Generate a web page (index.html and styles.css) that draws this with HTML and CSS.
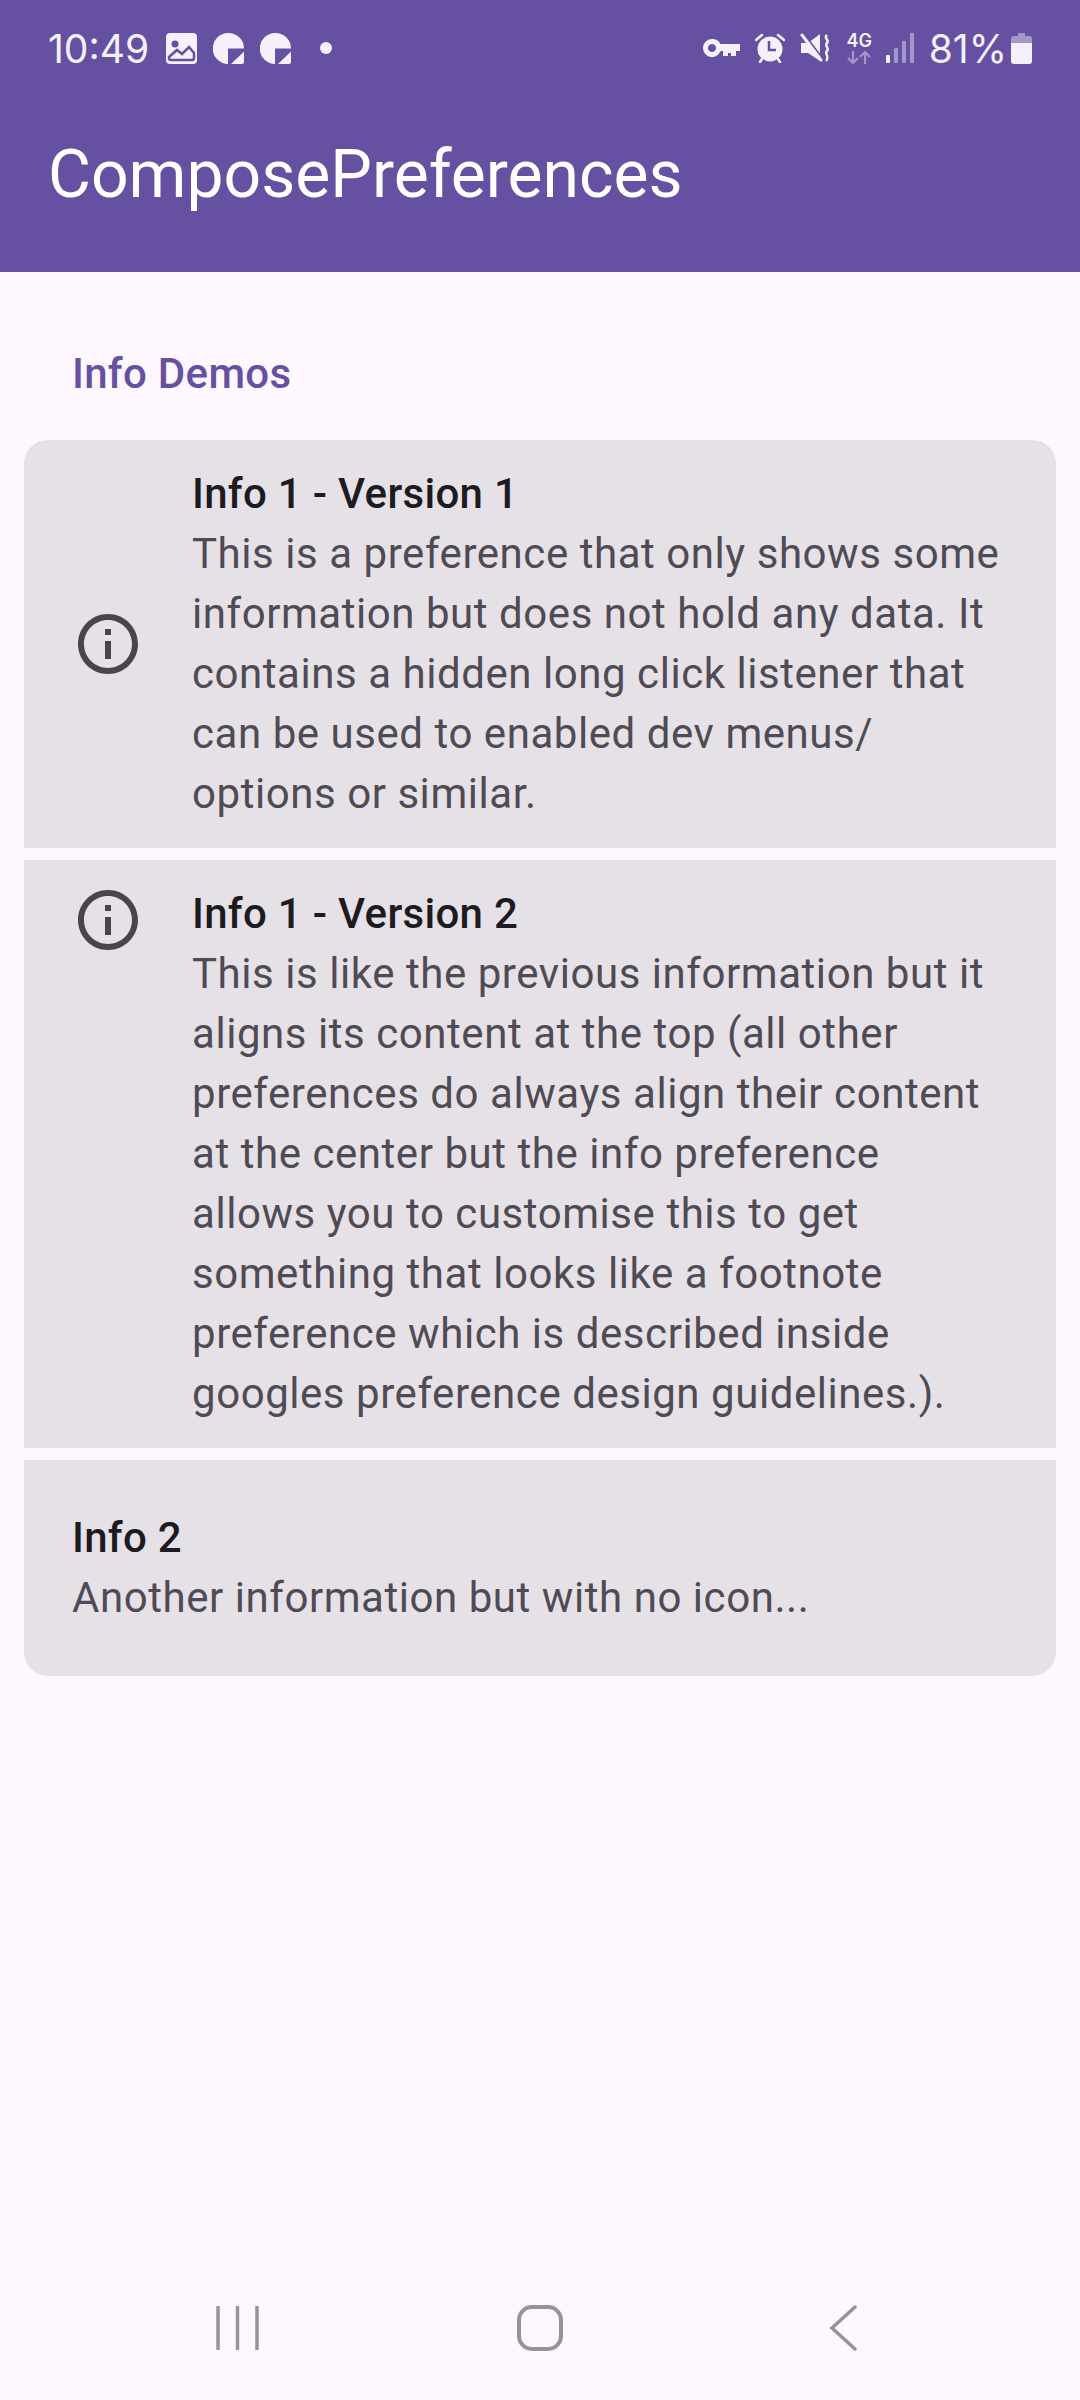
FILE: index.html
```html
<!DOCTYPE html>
<html lang="en">
<head>
    <meta charset="UTF-8">
    <title>ComposePreferences</title>
    <link rel="stylesheet" href="styles.css">
</head>
<body>
    <header class="app-header">
        <div class="status-bar">
            <div class="status-group status-left">
                <span class="clock">10:49</span>
                <svg class="ic-note" viewBox="0 0 31 31"><rect width="31" height="31" rx="4" fill="#f4f1fa"/><circle cx="9" cy="11" r="3.500" fill="#6650a1"/><path d="M3 24l8-7 5 4 7-7 5 6v5a2 2 0 0 1-2 2H5a2 2 0 0 1-2-2z" fill="none" stroke="#6650a1" stroke-width="2.500"/></svg>
                <svg class="ic-note" viewBox="0 0 31 31"><path fill="#f4f1fa" d="M15.500 0A15.500 15.500 0 0 1 31 15.500H15V31A15.500 15.500 0 0 1 15.500 0zM18 31L31 18.500V29a2 2 0 0 1-2 2z"/></svg>
                <svg class="ic-note" viewBox="0 0 31 31"><path fill="#f4f1fa" d="M15.500 0A15.500 15.500 0 0 1 31 15.500H15V31A15.500 15.500 0 0 1 15.500 0zM18 31L31 18.500V29a2 2 0 0 1-2 2z"/></svg>
                <span class="status-dot"></span>
            </div>
            <div class="status-group status-right">
                <svg class="ic-key" viewBox="0 0 38 18"><path fill="#f4f1fa" fill-rule="evenodd" d="M9 0a9 9 0 0 1 8.500 5H37v7h-4v5h-5v-3h-3v3h-5v-5h-2.500A9 9 0 1 1 9 0zm0 5a4 4 0 1 0 .01 0z"/></svg>
                <svg class="ic-alarm" viewBox="0 0 30 30"><circle cx="15" cy="16" r="12.500" fill="#f4f1fa"/><path d="M14 8v9h7" fill="none" stroke="#6650a1" stroke-width="2.500"/><path d="M1 7l6-5M29 7l-6-5M5 29l2-3M25 29l-2-3" stroke="#f4f1fa" stroke-width="2.500" stroke-linecap="round"/></svg>
                <svg class="ic-mute" viewBox="0 0 30 30"><path fill="#f4f1fa" d="M1 10h7l12-9v27l-12-8H1z"/><path d="M1 -2L23 27" stroke="#6650a1" stroke-width="3"/><path d="M2 2l19 25" stroke="#f4f1fa" stroke-width="3" stroke-linecap="round"/><path d="M27 2c-4 3 3 5 0 8s3 5 0 8 3 5-1 10" fill="none" stroke="#f4f1fa" stroke-width="2.500"/></svg>
                <div class="net">
                    <span class="net-label">4G</span>
                    <svg class="ic-arrows" viewBox="0 0 25 13"><path d="M6 0v12M1 7l5 5 5-5M18 13V1M13 6l5-5 5 5" fill="none" stroke="#a596c9" stroke-width="2.200"/></svg>
                </div>
                <svg class="ic-signal" viewBox="0 0 28 30"><rect y="22" width="4" height="8" rx="1" fill="#f4f1fa"/><rect x="8" y="15" width="4" height="15" rx="1" fill="#a596c9"/><rect x="16" y="8" width="4" height="22" rx="1" fill="#a596c9"/><rect x="24" y="0" width="4" height="30" rx="1" fill="#a596c9"/></svg>
                <span class="battery-text">81%</span>
                <svg class="ic-battery" viewBox="0 0 21 31"><path fill="#a596c9" d="M7 0h7v3h4a3 3 0 0 1 3 3v6H0V6a3 3 0 0 1 3-3h4z"/><path fill="#f4f1fa" d="M0 10h21v18a3 3 0 0 1-3 3H3a3 3 0 0 1-3-3z"/></svg>
            </div>
        </div>
        <div class="toolbar">ComposePreferences</div>
    </header>

    <main class="content">
        <div class="section-title">Info Demos</div>
        <div class="pref-list">
            <div class="pref pref-first">
                <svg class="info-icon" viewBox="0 0 24 24"><path fill="#49454f" d="M11 7h2v2h-2zm0 4h2v6h-2zm1-9C6.480 2 2 6.480 2 12s4.480 10 10 10 10-4.480 10-10S17.520 2 12 2zm0 18c-4.410 0-8-3.590-8-8s3.590-8 8-8 8 3.590 8 8-3.590 8-8 8z"/></svg>
                <div class="pref-text">
                    <div class="pref-title">Info 1 - Version 1</div>
                    <div class="pref-sub">This is a preference that only shows some information but does not hold any data. It contains a hidden long click listener that can be used to enabled dev menus/ options or similar.</div>
                </div>
            </div>
            <div class="pref pref-top">
                <svg class="info-icon" viewBox="0 0 24 24"><path fill="#49454f" d="M11 7h2v2h-2zm0 4h2v6h-2zm1-9C6.480 2 2 6.480 2 12s4.480 10 10 10 10-4.480 10-10S17.520 2 12 2zm0 18c-4.410 0-8-3.590-8-8s3.590-8 8-8 8 3.590 8 8-3.590 8-8 8z"/></svg>
                <div class="pref-text">
                    <div class="pref-title">Info 1 - Version 2</div>
                    <div class="pref-sub">This is like the previous information but it aligns its content at the top (all other preferences do always align their content at the center but the info preference allows you to customise this to get something that looks like a footnote preference which is described inside googles preference design guidelines.).</div>
                </div>
            </div>
            <div class="pref pref-last">
                <div class="pref-text">
                    <div class="pref-title">Info 2</div>
                    <div class="pref-sub">Another information but with no icon...</div>
                </div>
            </div>
        </div>
    </main>

    <nav class="nav-bar">
        <svg class="nav-recents" viewBox="0 0 44 44"><path d="M2 1v42M21.500 1v42M41 1v42" fill="none" stroke="#969299" stroke-width="3.500" stroke-linecap="round"/></svg>
        <svg class="nav-home" viewBox="0 0 46 46"><rect x="2" y="2" width="42" height="42" rx="13" fill="none" stroke="#969299" stroke-width="4"/></svg>
        <svg class="nav-back" viewBox="0 0 28 46"><path d="M26 2L3 23l23 21" fill="none" stroke="#969299" stroke-width="3.500" stroke-linecap="round"/></svg>
    </nav>
</body>
</html>
```

FILE: styles.css
```css
html, body {
    height: 100%;
    margin: 0;
}
body {
    width: 1080px;
    height: 2400px;
    display: flex;
    flex-direction: column;
    background: #fef7ff;
    font-family: Roboto, sans-serif;
    overflow: hidden;
}
.app-header {
    background: #6650a1;
    color: #fff;
}
.status-bar {
    height: 64px;
    padding: 16px 48px 0;
    display: flex;
    justify-content: space-between;
    align-items: center;
    color: #f4f1fa;
    font-family: Inter, sans-serif;
}
.status-group {
    display: flex;
    align-items: center;
}
.clock {
    font-size: 39px;
    margin-right: 17px;
}
.ic-note {
    width: 31px;
    height: 31px;
    margin-right: 16px;
}
.status-dot {
    width: 12px;
    height: 12px;
    margin-left: 13px;
    border-radius: 50%;
    background: #f4f1fa;
}
.ic-key {
    width: 38px;
    height: 18px;
    margin-right: 14px;
}
.ic-alarm {
    width: 30px;
    height: 30px;
    margin-right: 15px;
}
.ic-mute {
    width: 30px;
    height: 30px;
    margin-right: 17px;
}
.net {
    width: 25px;
    margin-right: 14px;
    display: flex;
    flex-direction: column;
    align-items: center;
}
.net-label {
    font-size: 18px;
    line-height: 16px;
    font-weight: 600;
}
.ic-arrows {
    width: 25px;
    height: 13px;
    margin-top: 2px;
}
.ic-signal {
    width: 28px;
    height: 30px;
    margin-right: 15px;
}
.battery-text {
    font-size: 39px;
    margin-right: 4px;
}
.ic-battery {
    width: 21px;
    height: 31px;
}
.toolbar {
    height: 189px;
    padding: 0 0 3px 48px;
    display: flex;
    align-items: center;
    font-size: 66px;
}
.content {
    flex: 1;
}
.section-title {
    padding: 72px 72px 36px;
    font-size: 42px;
    line-height: 60px;
    font-weight: 500;
    letter-spacing: 0.3px;
    color: #6650a1;
}
.pref-list {
    margin: 0 24px;
    display: flex;
    flex-direction: column;
    gap: 12px;
}
.pref {
    display: flex;
    align-items: center;
    padding: 24px 48px;
    background: #e6e1e6;
}
.pref-first {
    border-radius: 24px 24px 0 0;
}
.pref-top {
    align-items: flex-start;
}
.pref-last {
    padding-top: 48px;
    padding-bottom: 48px;
    border-radius: 0 0 24px 24px;
}
.info-icon {
    width: 72px;
    height: 72px;
    flex: none;
    margin-right: 48px;
}
.pref-text {
    flex: 1;
    min-width: 0;
}
.pref-title {
    font-size: 42px;
    line-height: 60px;
    font-weight: 500;
    letter-spacing: 0.3px;
    color: #1c1b1f;
}
.pref-sub {
    font-size: 42px;
    line-height: 60px;
    letter-spacing: 0.55px;
    color: #4f4b55;
}
.nav-bar {
    height: 144px;
    padding-left: 216px;
    display: flex;
    align-items: center;
}
.nav-recents {
    width: 44px;
    height: 44px;
    margin-right: 257px;
}
.nav-home {
    width: 46px;
    height: 46px;
    margin-right: 266px;
}
.nav-back {
    width: 28px;
    height: 46px;
}
```
